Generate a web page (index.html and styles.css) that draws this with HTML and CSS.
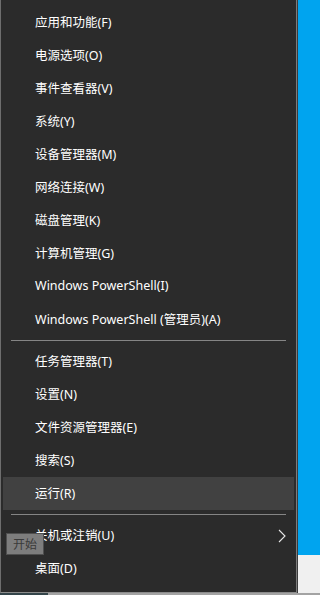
FILE: index.html
```html
<!DOCTYPE html>
<html lang="zh-CN">
<head>
<meta charset="utf-8">
<title>Win+X</title>
<link rel="stylesheet" href="styles.css">
</head>
<body>
<div class="screen">
  <div class="top">
    <nav class="menu">
      <div class="item">应用和功能(F)</div>
      <div class="item">电源选项(O)</div>
      <div class="item">事件查看器(V)</div>
      <div class="item">系统(Y)</div>
      <div class="item">设备管理器(M)</div>
      <div class="item">网络连接(W)</div>
      <div class="item">磁盘管理(K)</div>
      <div class="item">计算机管理(G)</div>
      <div class="item">Windows PowerShell(I)</div>
      <div class="item">Windows PowerShell (管理员)(A)</div>
      <div class="sep"></div>
      <div class="item">任务管理器(T)</div>
      <div class="item">设置(N)</div>
      <div class="item">文件资源管理器(E)</div>
      <div class="item">搜索(S)</div>
      <div class="item active">运行(R)</div>
      <div class="sep"></div>
      <div class="item has-sub">关机或注销(U)
        <svg class="chev" width="8" height="14" viewBox="0 0 8 14"><path d="M1 1 L7 7 L1 13" fill="none" stroke="#e8e8e8" stroke-width="1.1"/></svg>
      </div>
      <div class="item">桌面(D)</div>
    </nav>
    <div class="desk">
      <div class="blue"></div>
      <div class="light"></div>
    </div>
  </div>
  <div class="taskbar">
    <div class="tb-start"></div>
    <div class="tb-rest"></div>
  </div>
  <div class="tooltip">开始</div>
</div>
</body>
</html>
```
FILE: styles.css
```css
html, body {
  margin: 0;
  padding: 0;
  background: #f0f0f0;
}
.screen {
  position: relative;
  width: 100%;
  height: 595px;
  display: flex;
  flex-direction: column;
  overflow: hidden;
  font-family: "Noto Sans", "Noto Sans CJK SC", sans-serif;
}
.top {
  display: flex;
  height: 593px;
}
.menu {
  box-sizing: border-box;
  flex: 0 0 297px;
  width: 297px;
  height: 593px;
  background: #2b2b2b;
  border-left: 1px solid #6e6e6e;
  border-right: 1px solid #7c7c7c;
  border-bottom: 1px solid #8c8c8c;
  padding-top: 6px;
  display: flex;
  flex-direction: column;
}
.item {
  box-sizing: border-box;
  height: 33px;
  margin: 0 2px;
  padding-left: 32px;
  padding-bottom: 2px;
  display: flex;
  align-items: center;
  color: #ffffff;
  font-size: 12.5px;
  white-space: nowrap;
  position: relative;
}
.item.active {
  background: #414141;
}
.has-sub {
  justify-content: space-between;
  padding-right: 8px;
}
.chev {
  display: block;
  margin-top: 2px;
}
.sep {
  height: 1px;
  margin: 4px 10px;
  background: #858585;
}
.desk {
  flex: 1;
  display: flex;
  flex-direction: column;
  border-left: 1px solid #3c3c3c;
}
.blue {
  height: 555px;
  background: #00a4ef;
}
.light {
  flex: 1;
  background: #f0f0f0;
}
.taskbar {
  height: 2px;
  display: flex;
}
.tb-start {
  width: 48px;
  background: #34454a;
}
.tb-rest {
  flex: 1;
  background: #a3a3a3;
}
.tooltip {
  position: absolute;
  left: 6px;
  top: 533px;
  box-sizing: border-box;
  width: 38px;
  height: 22px;
  background: #7d7d7d;
  border: 1px solid #4f4f4f;
  color: #3a3a3a;
  font-size: 12px;
  display: flex;
  align-items: center;
  justify-content: center;
}
```
